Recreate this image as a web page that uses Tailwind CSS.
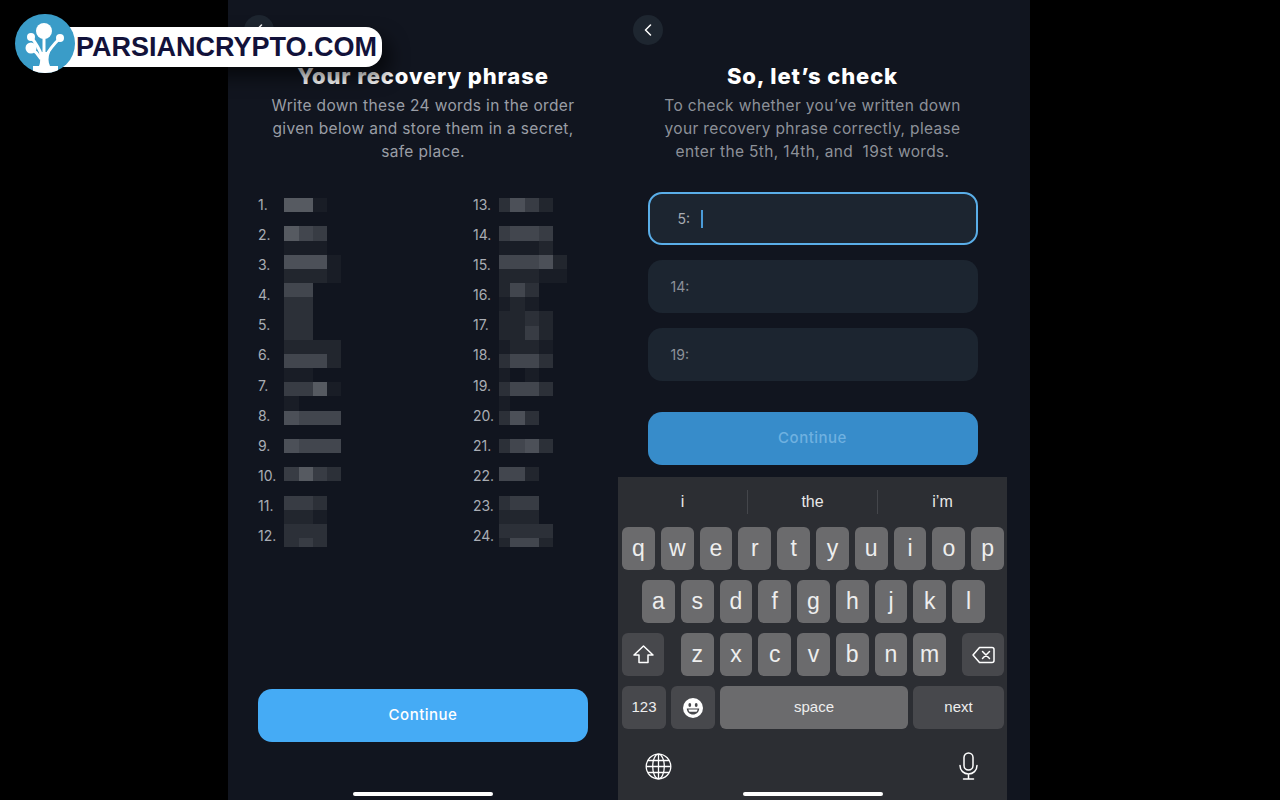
<!doctype html>
<html lang="en">
<head>
<meta charset="utf-8">
<title>Recovery phrase</title>
<script src="https://cdn.jsdelivr.net/npm/@tailwindcss/browser@4"></script>
</head>
<body class="bg-black">
<main class="relative w-[1280px] h-[800px] overflow-hidden bg-black flex font-['Inter',sans-serif]">
    <div class="w-[228px] shrink-0"></div>

    <!-- left phone -->
    <section class="w-[390px] shrink-0 h-full bg-[#11151f] flex flex-col items-center pt-[15px]">
        <button class="self-start ml-[16px] w-[30px] h-[30px] rounded-full bg-[#1e2630] flex items-center justify-center">
            <svg width="8" height="12" viewBox="0 0 8 12" fill="none" stroke="#fff" stroke-width="1.5" stroke-linecap="round" stroke-linejoin="round"><path d="M6.5 1 1.500 6l5 5"/></svg>
        </button>
        <h2 class="mt-[15px] h-[32px] leading-[32px] text-[22px] tracking-[0.9px] font-extrabold text-white">Your recovery phrase</h2>
        <p class="mt-[2px] text-[15.5px] tracking-[0.35px] leading-[23px] text-[#9a9ea6] text-center">Write down these 24 words in the order<br>given below and store them in a secret,<br>safe place.</p>

        <div class="mt-[26px] w-[330px] flex text-[14px] text-[#a9adb4]">
            <div class="flex w-[215px] shrink-0">
                <ol class="w-[26px] shrink-0">
                    <li class="h-[30.18px] flex items-center">1.</li>
                    <li class="h-[30.18px] flex items-center">2.</li>
                    <li class="h-[30.18px] flex items-center">3.</li>
                    <li class="h-[30.18px] flex items-center">4.</li>
                    <li class="h-[30.18px] flex items-center">5.</li>
                    <li class="h-[30.18px] flex items-center">6.</li>
                    <li class="h-[30.18px] flex items-center">7.</li>
                    <li class="h-[30.18px] flex items-center">8.</li>
                    <li class="h-[30.18px] flex items-center">9.</li>
                    <li class="h-[30.18px] flex items-center">10.</li>
                    <li class="h-[30.18px] flex items-center">11.</li>
                    <li class="h-[30.18px] flex items-center">12.</li>
                </ol>
                <svg id="mosaic-a" class="mt-[9px]" width="72" height="349" shape-rendering="crispEdges"></svg>
            </div>
            <div class="flex">
                <ol class="w-[26px] shrink-0">
                    <li class="h-[30.18px] flex items-center">13.</li>
                    <li class="h-[30.18px] flex items-center">14.</li>
                    <li class="h-[30.18px] flex items-center">15.</li>
                    <li class="h-[30.18px] flex items-center">16.</li>
                    <li class="h-[30.18px] flex items-center">17.</li>
                    <li class="h-[30.18px] flex items-center">18.</li>
                    <li class="h-[30.18px] flex items-center">19.</li>
                    <li class="h-[30.18px] flex items-center">20.</li>
                    <li class="h-[30.18px] flex items-center">21.</li>
                    <li class="h-[30.18px] flex items-center">22.</li>
                    <li class="h-[30.18px] flex items-center">23.</li>
                    <li class="h-[30.18px] flex items-center">24.</li>
                </ol>
                <svg id="mosaic-b" class="mt-[9px]" width="72" height="349" shape-rendering="crispEdges"></svg>
            </div>
        </div>

        <button class="mt-auto w-[330px] h-[53px] rounded-[14px] bg-[#45abf5] text-white text-[15px] tracking-[0.5px] font-medium">Continue</button>
        <div class="mt-[50px] mb-[4px] w-[140px] h-[4px] rounded-full bg-white"></div>
    </section>

    <!-- right phone -->
    <section class="w-[412px] shrink-0 h-full bg-[#11151f] flex flex-col pt-[15px]">
        <div class="w-[389px] flex flex-col items-center">
            <button class="self-start ml-[15px] w-[30px] h-[30px] rounded-full bg-[#1e2630] flex items-center justify-center">
                <svg width="8" height="12" viewBox="0 0 8 12" fill="none" stroke="#fff" stroke-width="1.5" stroke-linecap="round" stroke-linejoin="round"><path d="M6.5 1 1.500 6l5 5"/></svg>
            </button>
            <h2 class="mt-[15px] h-[32px] leading-[32px] text-[22px] tracking-[0.9px] font-extrabold text-white">So, let’s check</h2>
            <p class="mt-[2px] text-[15.5px] tracking-[0.35px] leading-[23px] text-[#8d9199] text-center whitespace-pre">To check whether you’ve written down<br>your recovery phrase correctly, please<br>enter the 5th, 14th, and  19st words.</p>

            <div class="mt-[29px] w-[330px] h-[53px] rounded-[14px] border-2 border-[#5aaee8] bg-[#1c2530] flex items-center pl-[28px] text-[14px] text-[#a9adb4]">
                <span>5:</span><span class="ml-[11px] w-[2px] h-[18px] bg-[#4a9bd8]"></span>
            </div>
            <div class="mt-[15px] w-[330px] h-[53px] rounded-[14px] bg-[#1c2530] flex items-center pl-[23px] text-[14px] text-[#8d9199]">14:</div>
            <div class="mt-[15px] w-[330px] h-[53px] rounded-[14px] bg-[#1c2530] flex items-center pl-[23px] text-[14px] text-[#8d9199]">19:</div>
            <button class="mt-[31px] w-[330px] h-[53px] rounded-[14px] bg-[#378cca] text-[#6fb1e0] text-[15px] tracking-[0.5px] font-medium">Continue</button>
        </div>

        <!-- keyboard -->
        <div class="mt-[12px] w-[389px] flex-1 bg-[#2c2e33] flex flex-col font-['Liberation_Sans',sans-serif] text-white pl-[4px] pr-[3px]">
            <div class="-ml-[4px] -mr-[3px] h-[50px] shrink-0 flex items-center text-[16px] text-[#e8e8e8]">
                <span class="flex-1 text-center">i</span>
                <span class="w-px h-[24px] bg-[#44464b]"></span>
                <span class="flex-1 text-center">the</span>
                <span class="w-px h-[24px] bg-[#44464b]"></span>
                <span class="flex-1 text-center">i’m</span>
            </div>
            <div class="flex gap-[6px] h-[43px] text-[23px] text-[#eee]">
                <span class="flex-1 rounded-[6px] bg-[#6b6b6d] flex items-center justify-center">q</span>
                <span class="flex-1 rounded-[6px] bg-[#6b6b6d] flex items-center justify-center">w</span>
                <span class="flex-1 rounded-[6px] bg-[#6b6b6d] flex items-center justify-center">e</span>
                <span class="flex-1 rounded-[6px] bg-[#6b6b6d] flex items-center justify-center">r</span>
                <span class="flex-1 rounded-[6px] bg-[#6b6b6d] flex items-center justify-center">t</span>
                <span class="flex-1 rounded-[6px] bg-[#6b6b6d] flex items-center justify-center">y</span>
                <span class="flex-1 rounded-[6px] bg-[#6b6b6d] flex items-center justify-center">u</span>
                <span class="flex-1 rounded-[6px] bg-[#6b6b6d] flex items-center justify-center">i</span>
                <span class="flex-1 rounded-[6px] bg-[#6b6b6d] flex items-center justify-center">o</span>
                <span class="flex-1 rounded-[6px] bg-[#6b6b6d] flex items-center justify-center">p</span>
            </div>
            <div class="mt-[10px] pl-[20px] pr-[19px] flex gap-[6px] h-[43px] text-[23px] text-[#eee]">
                <span class="flex-1 rounded-[6px] bg-[#6b6b6d] flex items-center justify-center">a</span>
                <span class="flex-1 rounded-[6px] bg-[#6b6b6d] flex items-center justify-center">s</span>
                <span class="flex-1 rounded-[6px] bg-[#6b6b6d] flex items-center justify-center">d</span>
                <span class="flex-1 rounded-[6px] bg-[#6b6b6d] flex items-center justify-center">f</span>
                <span class="flex-1 rounded-[6px] bg-[#6b6b6d] flex items-center justify-center">g</span>
                <span class="flex-1 rounded-[6px] bg-[#6b6b6d] flex items-center justify-center">h</span>
                <span class="flex-1 rounded-[6px] bg-[#6b6b6d] flex items-center justify-center">j</span>
                <span class="flex-1 rounded-[6px] bg-[#6b6b6d] flex items-center justify-center">k</span>
                <span class="flex-1 rounded-[6px] bg-[#6b6b6d] flex items-center justify-center">l</span>
            </div>
            <div class="mt-[10px] flex h-[43px] text-[23px] text-[#eee]">
                <span class="w-[42px] rounded-[6px] bg-[#47484c] flex items-center justify-center">
                    <svg width="21" height="19" viewBox="0 0 21 19" fill="none" stroke="#fff" stroke-width="1.5" stroke-linejoin="round"><path d="M10.5 1 1 10h5v7.5h9V10h5z"/></svg>
                </span>
                <div class="flex-1 pl-[17px] pr-[16px] flex gap-[6px]">
                    <span class="flex-1 rounded-[6px] bg-[#6b6b6d] flex items-center justify-center">z</span>
                    <span class="flex-1 rounded-[6px] bg-[#6b6b6d] flex items-center justify-center">x</span>
                    <span class="flex-1 rounded-[6px] bg-[#6b6b6d] flex items-center justify-center">c</span>
                    <span class="flex-1 rounded-[6px] bg-[#6b6b6d] flex items-center justify-center">v</span>
                    <span class="flex-1 rounded-[6px] bg-[#6b6b6d] flex items-center justify-center">b</span>
                    <span class="flex-1 rounded-[6px] bg-[#6b6b6d] flex items-center justify-center">n</span>
                    <span class="flex-1 rounded-[6px] bg-[#6b6b6d] flex items-center justify-center">m</span>
                </div>
                <span class="w-[42px] rounded-[6px] bg-[#47484c] flex items-center justify-center">
                    <svg width="23" height="18" viewBox="0 0 23 18" fill="none" stroke="#fff" stroke-width="1.5" stroke-linejoin="round" stroke-linecap="round"><path d="M7.5 1.500H20a2 2 0 0 1 2 2v11a2 2 0 0 1-2 2H7.500L1 9z"/><path d="m10.500 5.500 7 7m0-7-7 7"/></svg>
                </span>
            </div>
            <div class="mt-[10px] flex gap-[5px] h-[43px] text-[15px] text-[#eee]">
                <span class="w-[44px] rounded-[6px] bg-[#47484c] flex items-center justify-center">123</span>
                <span class="w-[44px] rounded-[6px] bg-[#47484c] flex items-center justify-center">
                    <svg width="20" height="20" viewBox="0 0 20 20"><circle cx="10" cy="10" r="10" fill="#fff"/><ellipse cx="6.800" cy="7" rx="1.400" ry="2" fill="#47484c"/><ellipse cx="13.200" cy="7" rx="1.400" ry="2" fill="#47484c"/><path d="M3.800 10.500h12.400c0 3.400-2.800 6-6.200 6s-6.200-2.600-6.200-6z" fill="#47484c"/><path d="M5.400 11.600h9.200c-.2 1-.5 1.600-1 2.200H6.400c-.5-.6-.8-1.200-1-2.200z" fill="#fff"/></svg>
                </span>
                <span class="flex-1 rounded-[6px] bg-[#6b6b6d] flex items-center justify-center">space</span>
                <span class="w-[91px] rounded-[6px] bg-[#47484c] flex items-center justify-center">next</span>
            </div>
            <div class="mt-[23px] pl-[23px] pr-[26px] flex justify-between items-center">
                <svg width="27" height="27" viewBox="0 0 27 27" fill="none" stroke="#fff" stroke-width="1.300"><circle cx="13.500" cy="13.500" r="12.300"/><ellipse cx="13.500" cy="13.500" rx="5.800" ry="12.300"/><path d="M13.500 1.200v24.600M1.200 13.500h24.600M3 7.500h21M3 19.500h21"/></svg>
                <svg width="19" height="28" viewBox="0 0 19 28" fill="none" stroke="#fff" stroke-width="1.500" stroke-linecap="round"><rect x="5" y="1" width="9" height="17" rx="4.500"/><path d="M1 13.500c0 5 3.800 8.500 8.500 8.500s8.500-3.500 8.500-8.500M9.500 22v5M4.500 27h10"/></svg>
            </div>
        </div>
    </section>

    <div class="absolute left-[743px] bottom-[4px] w-[140px] h-[4px] rounded-full bg-white"></div>

    <!-- watermark -->
    <div class="absolute left-[50px] top-[27px] w-[332px] h-[40px] rounded-r-[16px] rounded-l-[4px] bg-white shadow-[8px_10px_18px_rgba(0,0,0,0.6)] flex items-center pl-[26px] font-['Liberation_Sans',sans-serif] font-bold text-[27px] text-[#12123a] whitespace-nowrap">PARSIANCRYPTO.COM</div>
    <div class="absolute left-[15px] top-[14px] w-[60px] h-[59px] rounded-full bg-[#3a9cc8] overflow-hidden">
        <svg width="60" height="59" viewBox="0 0 60 59">
            <g fill="#fff"><circle cx="29" cy="17" r="8"/><circle cx="45" cy="24" r="4"/><circle cx="16" cy="23" r="4"/><circle cx="16" cy="34" r="5.500"/><path d="M18 52h6c2-4 1-10 0-14h11c-2 5-2 10 0 14h8v7H18z"/></g>
            <g fill="none" stroke="#fff" stroke-width="3"><path d="M29 42V20M31 42c3-6 8-12 14-18M27 42c-3-8-7-14-11-19M26 45c-3-5-6-8-10-11"/></g>
        </svg>
    </div>
</main>
<script>
    // redaction blocks over the words: one row of shades per 14px band, 0 = nothing drawn
    const shades = ['', '#191d26', '#22262e', '#2c3038', '#383c44', '#42464e', '#4c5058', '#565a61']
    const mosaicA = ['7710','0000','7540','1110','6661','2221','5500','3300','3300','3300','2222','5552','1100','4471','1000','6555','0000','6555','0000','4743','0000','4430','2210','3330','3430']
    const mosaicB = ['36420','00000','45540','11120','55562','22211','25300','12100','22320','22420','12210','35530','10100','35530','10000','36300','00000','35630','00000','55200','00000','34400','22200','33330','25520']

    function drawMosaic(id, rows, colWidths) {
        const svg = document.getElementById(id)
        rows.forEach((row, r) => {
            let x = 0
            ;[...row].forEach((cell, c) => {
                if (cell !== '0') {
                    const rect = document.createElementNS('http://www.w3.org/2000/svg', 'rect')
                    rect.setAttribute('x', x)
                    rect.setAttribute('y', r * 14.17)
                    rect.setAttribute('width', colWidths[c])
                    rect.setAttribute('height', 14.17)
                    rect.setAttribute('fill', shades[+cell])
                    svg.appendChild(rect)
                }
                x += colWidths[c]
            })
        })
    }

    drawMosaic('mosaic-a', mosaicA, [14.5, 14, 14.300, 14])
    drawMosaic('mosaic-b', mosaicB, [11.400, 14.300, 14.300, 14, 14.300])
</script>
</body>
</html>
